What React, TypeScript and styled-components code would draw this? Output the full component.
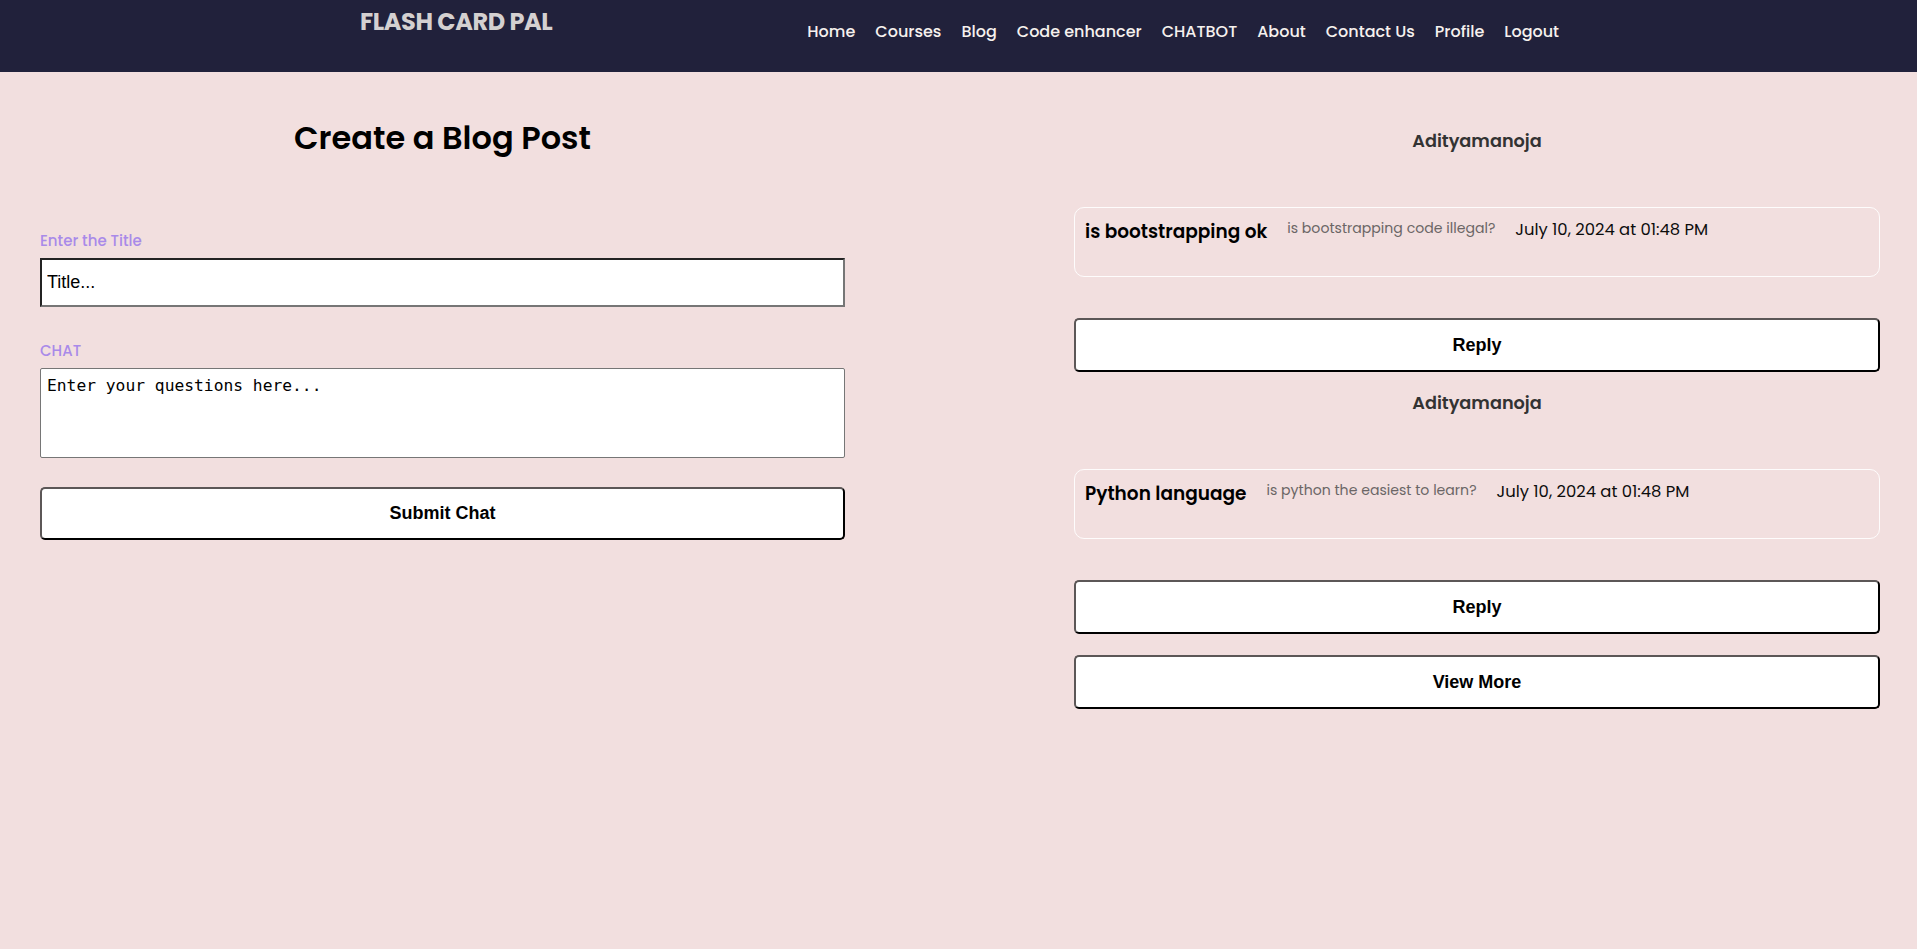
import React from "react";
import styled, { createGlobalStyle } from "styled-components";

const GlobalStyle = createGlobalStyle`
  html, body {
    margin: 0;
    padding: 0;
    background: #f2dfdf;
  }
  body {
    font-family: "Poppins", "Inter", "Liberation Sans", sans-serif;
    min-height: 100vh;
  }
  * { box-sizing: border-box; }
`;

const Page = styled.div`
  min-height: 100vh;
  background: #f2dfdf;
`;

const Header = styled.header`
  height: 72px;
  background: #21213b;
  display: flex;
  align-items: flex-start;
  padding-left: 360px;
`;

const Logo = styled.h1`
  margin: 7px 0 0;
  font-family: "Poppins", "Inter", sans-serif;
  font-size: 24px;
  font-weight: 700;
  line-height: 30px;
  letter-spacing: -0.4px;
  color: #d4d0d0;
  white-space: nowrap;
`;

const Nav = styled.nav`
  display: flex;
  gap: 20px;
  margin: 20px 0 0 255px;
`;

const NavLink = styled.a`
  font-family: "Poppins", "Inter", sans-serif;
  font-size: 16px;
  font-weight: 500;
  line-height: 24px;
  color: #f6f1ee;
  text-decoration: none;
  white-space: nowrap;
`;

const Main = styled.main`
  display: flex;
  justify-content: space-between;
  align-items: flex-start;
  padding: 0 37px 0 40px;
`;

const LeftColumn = styled.section`
  width: 805px;
  display: flex;
  flex-direction: column;
`;

const RightColumn = styled.section`
  width: 806px;
  display: flex;
  flex-direction: column;
  padding-top: 38px;
`;

const Heading = styled.h2`
  margin: 42px 0 0;
  font-size: 32px;
  font-weight: 600;
  line-height: 48px;
  color: #000;
  text-align: center;
`;

const FieldLabel = styled.label<{ $gap: number }>`
  display: block;
  margin-top: ${(p) => p.$gap}px;
  font-size: 15px;
  font-weight: 500;
  line-height: 22px;
  color: #a98ae9;
`;

const TitleInput = styled.input`
  margin-top: 6px;
  width: 100%;
  height: 49px;
  padding: 0 5px;
  background: #fff;
  border-style: solid;
  border-width: 2px;
  border-color: #232323 #767676 #767676 #232323;
  font-family: "Liberation Sans", Arial, sans-serif;
  font-size: 18px;
  color: #000;
  outline: none;
  &::placeholder { color: #000; opacity: 1; }
`;

const ChatArea = styled.textarea`
  margin-top: 6px;
  width: 100%;
  height: 90px;
  padding: 7px 6px;
  background: #fff;
  border: 1px solid #767676;
  border-radius: 2px;
  font-family: "DejaVu Sans Mono", monospace;
  font-size: 16.3px;
  color: #000;
  resize: none;
  outline: none;
  &::placeholder { color: #000; opacity: 1; }
`;

const ActionButton = styled.button<{ $gap: number; $h: number }>`
  display: block;
  width: 100%;
  height: ${(p) => p.$h}px;
  margin-top: ${(p) => p.$gap}px;
  background: #fff;
  border-style: solid;
  border-width: 2px;
  border-color: #5c5757 #000 #000 #5c5757;
  border-radius: 5px;
  font-family: "Liberation Sans", Arial, sans-serif;
  font-size: 18px;
  font-weight: 700;
  color: #000;
  cursor: pointer;
`;

const Author = styled.h3<{ $gap: number }>`
  margin: ${(p) => p.$gap}px 0 0;
  font-size: 17.7px;
  font-weight: 600;
  line-height: 26px;
  color: #333;
  text-align: center;
`;

const PostCard = styled.article`
  margin-top: 53px;
  height: 70px;
  padding: 10px;
  border: 1px solid rgba(255, 255, 255, 0.9);
  border-radius: 10px;
  display: flex;
  align-items: flex-start;
  gap: 20px;
`;

const PostTitle = styled.h4`
  margin: 0;
  font-size: 18.5px;
  font-weight: 600;
  line-height: 28px;
  color: #000;
  white-space: nowrap;
`;

const PostBody = styled.p`
  margin: 0;
  font-size: 14.1px;
  font-weight: 400;
  line-height: 21px;
  color: #6b6666;
  white-space: nowrap;
`;

const PostDate = styled.span`
  font-size: 16.4px;
  font-weight: 400;
  line-height: 24px;
  color: #0d0d0d;
  white-space: nowrap;
`;

const navItems = ["Home", "Courses", "Blog", "Code enhancer", "CHATBOT", "About", "Contact Us", "Profile", "Logout"];

const posts = [
  { author: "Adityamanoja", title: "is bootstrapping ok", body: "is bootstrapping code illegal?", date: "July 10, 2024 at 01:48 PM" },
  { author: "Adityamanoja", title: "Python language", body: "is python the easiest to learn?", date: "July 10, 2024 at 01:48 PM" },
];

export default function App() {
  return (
    <Page>
      <GlobalStyle />
      <Header>
        <Logo>FLASH CARD PAL</Logo>
        <Nav>
          {navItems.map((n) => (
            <NavLink key={n} href="#">{n}</NavLink>
          ))}
        </Nav>
      </Header>
      <Main>
        <LeftColumn>
          <Heading>Create a Blog Post</Heading>
          <FieldLabel $gap={68} htmlFor="title">Enter the Title</FieldLabel>
          <TitleInput id="title" placeholder="Title..." />
          <FieldLabel $gap={33} htmlFor="chat">CHAT</FieldLabel>
          <ChatArea id="chat" placeholder="Enter your questions here..." />
          <ActionButton $gap={29} $h={53}>Submit Chat</ActionButton>
        </LeftColumn>
        <RightColumn>
          {posts.map((p, i) => (
            <React.Fragment key={i}>
              <Author $gap={18}>{p.author}</Author>
              <PostCard>
                <PostTitle>{p.title}</PostTitle>
                <PostBody>{p.body}</PostBody>
                <PostDate>{p.date}</PostDate>
              </PostCard>
              <ActionButton $gap={41} $h={54}>Reply</ActionButton>
            </React.Fragment>
          ))}
          <ActionButton $gap={21} $h={54}>View More</ActionButton>
        </RightColumn>
      </Main>
    </Page>
  );
}
